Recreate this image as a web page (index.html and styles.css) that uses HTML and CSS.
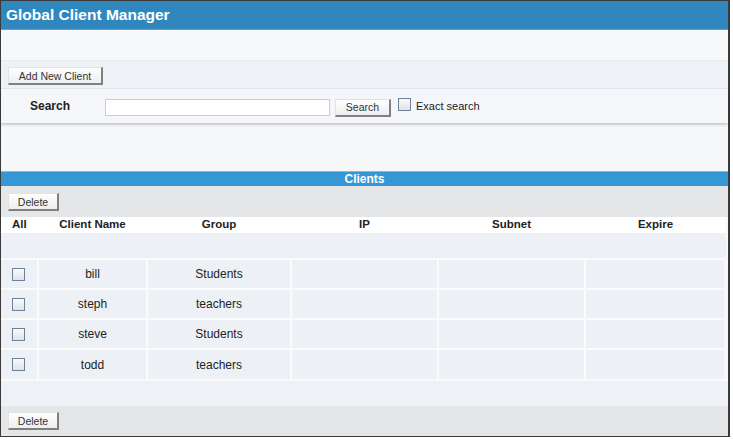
FILE: index.html
```html
<!DOCTYPE html>
<html lang="en">

<head>
  <meta charset="UTF-8">
  <title>Global Client Manager</title>
  <link rel="stylesheet" href="styles.css">
</head>

<body>
  <div class="frame">
    <!-- title -->
    <div class="title">Global Client Manager</div>
    <div class="top-space"></div>
    <!-- add / search -->
    <div class="toolbar">
      <button class="btn btn-add">Add New Client</button>
    </div>
    <div class="search-row">
      <span class="search-label">Search</span>
      <input class="search-input" type="text">
      <button class="btn btn-search">Search</button>
      <span class="box box-exact"></span>
      <span class="exact-text">Exact search</span>
    </div>
    <div class="gap"></div>
    <!-- clients list -->
    <div class="section-bar">Clients</div>
    <div class="actions">
      <button class="btn btn-delete">Delete</button>
    </div>
    <table class="clients">
      <tr class="head">
        <th class="c-check">All</th>
        <th class="c-name">Client Name</th>
        <th class="c-group">Group</th>
        <th class="c-ip">IP</th>
        <th class="c-subnet">Subnet</th>
        <th class="c-expire">Expire</th>
      </tr>
      <tr class="empty">
        <td colspan="6"></td>
      </tr>
      <tr class="row">
        <td class="c-check"><span class="box"></span></td>
        <td>bill</td>
        <td>Students</td>
        <td></td>
        <td></td>
        <td></td>
      </tr>
      <tr class="row">
        <td class="c-check"><span class="box"></span></td>
        <td>steph</td>
        <td>teachers</td>
        <td></td>
        <td></td>
        <td></td>
      </tr>
      <tr class="row">
        <td class="c-check"><span class="box"></span></td>
        <td>steve</td>
        <td>Students</td>
        <td></td>
        <td></td>
        <td></td>
      </tr>
      <tr class="row">
        <td class="c-check"><span class="box"></span></td>
        <td>todd</td>
        <td>teachers</td>
        <td></td>
        <td></td>
        <td></td>
      </tr>
    </table>
    <div class="table-foot"></div>
    <div class="actions actions-bottom">
      <button class="btn btn-delete">Delete</button>
    </div>
  </div>
</body>

</html>
```

FILE: styles.css
```css
* {
  margin: 0;
  padding: 0;
  box-sizing: border-box;
}

body {
  background: #fff;
  font-family: "Liberation Sans", Arial, sans-serif;
  color: #222;
}

.frame {
  width: 730px;
  height: 437px;
  border: 1px solid #3a3a3a;
  border-right-width: 2px;
  border-bottom-width: 2px;
  background: #f6f7f8;
}

.title {
  height: 29px;
  padding: 5px 0 0 5px;
  background: #3087be;
  border-bottom: 1px solid #5aa2cf;
  color: #fff;
  font-size: 15.5px;
  font-weight: bold;
}

.top-space {
  height: 30px;
  background: #f7f8fa;
}

.toolbar {
  height: 29px;
  padding: 6px 0 0 7px;
  background: #eef2f7;
  border-top: 1px solid #e8ecf1;
  border-bottom: 1px solid #e3e7ec;
}

.btn {
  display: block;
  height: 18px;
  background: linear-gradient(#ffffff, #eeeeee);
  border-top: 1px solid #e2e2e2;
  border-left: 1px solid #e2e2e2;
  border-right: 2px solid #808080;
  border-bottom: 2px solid #808080;
  font-family: "Liberation Sans", Arial, sans-serif;
  font-size: 10.5px;
  color: #333;
}

.btn-add {
  width: 95px;
}

.search-row {
  display: flex;
  align-items: center;
  height: 34px;
  background: #f4f6f9;
  box-shadow: 0 2px 2px rgba(0, 0, 0, 0.18);
}

.search-label {
  width: 75px;
  margin-left: 29px;
  font-size: 12px;
  font-weight: bold;
}

.search-input {
  width: 225px;
  height: 17px;
  margin-top: 2px;
  border: 1px solid #c9ced5;
  background: #fff;
}

.btn-search {
  width: 56px;
  margin: 3px 0 0 5px;
}

.box {
  display: inline-block;
  width: 13px;
  height: 13px;
  border: 1px solid #6d8199;
  background: linear-gradient(#f8f9fb, #dfe4ea);
}

.box-exact {
  margin: -4px 0 0 7px;
}

.exact-text {
  margin: -1px 0 0 5px;
  font-size: 11px;
}

.gap {
  height: 48px;
}

.section-bar {
  height: 15px;
  background: #3597d3;
  border-top: 1px solid #7fbde3;
  color: #fff;
  font-size: 12px;
  font-weight: bold;
  text-align: center;
  line-height: 14px;
}

.actions {
  height: 31px;
  padding: 7px 0 0 7px;
  background: #e4e6e8;
}

.btn-delete {
  width: 51px;
}

.clients {
  width: 727px;
  border-collapse: collapse;
  table-layout: fixed;
  background: #f6f8fb;
}

.clients th {
  height: 16px;
  background: #fff;
  font-size: 11.5px;
  font-weight: bold;
  color: #222;
  vertical-align: top;
  padding-top: 1px;
}

.clients th.c-check {
  text-align: left;
  padding-left: 11px;
}

.c-check {
  width: 37px;
}

.c-name {
  width: 109px;
}

.c-group {
  width: 144px;
}

.c-ip {
  width: 147px;
}

.c-subnet {
  width: 147px;
}

.empty td {
  height: 26px;
  background: #edf1f6;
}

.row td {
  height: 30px;
  background: #edf1f6;
  border-top: 2px solid #f9fbfd;
  border-left: 2px solid #f9fbfd;
  font-size: 12px;
  color: #222;
  text-align: center;
}

.row td:first-child {
  border-left: 0;
  text-align: left;
  padding: 3px 0 0 11px;
}

.row td:last-child {
  border-right: 4px solid #f6f8fb;
}

.table-foot {
  height: 27px;
  background: #eef2f7;
  border-top: 2px solid #f9fbfd;
}

.actions-bottom {
  height: 30px;
  padding-top: 6px;
}
```
